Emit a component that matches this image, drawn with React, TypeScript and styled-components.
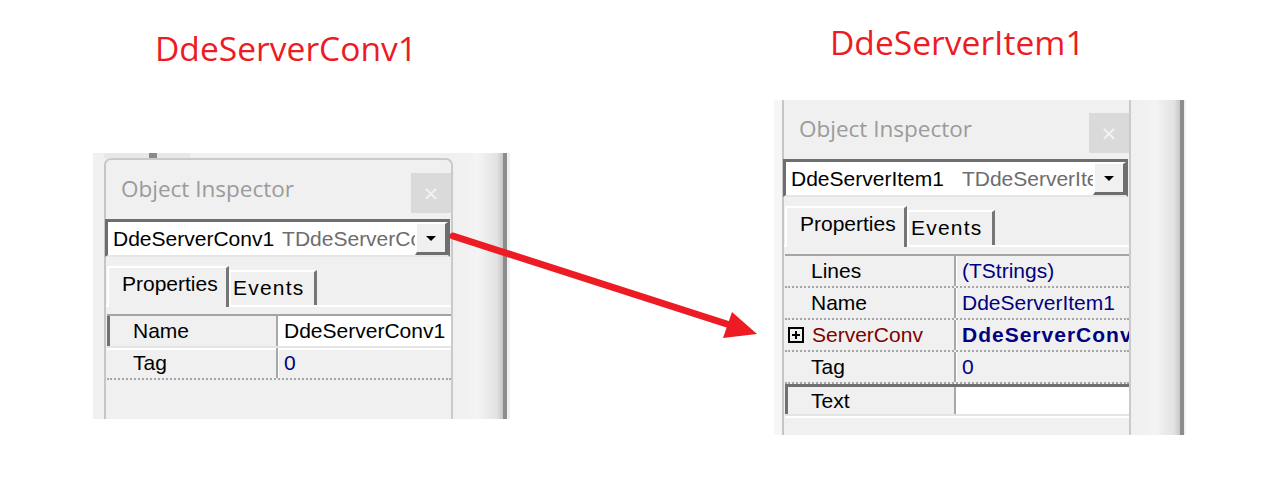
import styled, { createGlobalStyle } from "styled-components";

interface PropRow {
  name: string;
  value: string;
  selected?: boolean;
  expandable?: boolean;
  plainValue?: boolean;
}

interface ShotProps {
  objectName: string;
  typeName: string;
  typeGap: number;
  rows: PropRow[];
  framed?: boolean;
  width: number;
  height: number;
  gutter: number;
  gutterColor: string;
  tail: number;
}

const GlobalStyle = createGlobalStyle`
  html, body {
    margin: 0;
    padding: 0;
    background: #ffffff;
  }
  body {
    font-family: "Liberation Sans", Arial, sans-serif;
  }
`;

const Page = styled.div`
  position: relative;
  width: 1288px;
  height: 494px;
  box-sizing: border-box;
  padding-left: 93px;
  display: flex;
  align-items: flex-start;
  gap: 264px;
  overflow: hidden;
`;

const Column = styled.div<{ $top: number }>`
  display: flex;
  flex-direction: column;
  padding-top: ${(p) => p.$top}px;
`;

const Caption = styled.div<{ $indent: number; $gap: number }>`
  margin-left: ${(p) => p.$indent}px;
  margin-bottom: ${(p) => p.$gap}px;
  height: 34px;
  font-family: "Open Sans", "Noto Sans", sans-serif;
  font-size: 33.6px;
  line-height: 34px;
  color: #ed1c24;
  white-space: nowrap;
`;

const Shot = styled.div<{ $w: number; $h: number }>`
  display: flex;
  width: ${(p) => p.$w}px;
  height: ${(p) => p.$h}px;
  background: #f0f0f0;
  overflow: hidden;
`;

const Gutter = styled.div<{ $w: number; $bg: string }>`
  flex: none;
  width: ${(p) => p.$w}px;
  background: ${(p) => p.$bg};
`;

const Main = styled.div`
  flex: none;
  width: 349px;
  display: flex;
  flex-direction: column;
`;

const TopEdge = styled.div`
  flex: none;
  height: 5px;
  display: flex;
  background: linear-gradient(to right, #e8e8e8 0, #e8e8e8 86px, #f0f0f0 86px);
`;

const Tick = styled.div`
  margin-left: 45px;
  width: 8px;
  background: #8a8a8a;
`;

const Panel = styled.div<{ $framed?: boolean }>`
  flex: 1;
  display: flex;
  flex-direction: column;
  background: #f0f0f0;
  border-left: 2px solid #c6c6c6;
  border-right: 2px solid #cacaca;
  ${(p) =>
    p.$framed &&
    `
    border-top: 2px solid #cacaca;
    border-radius: 7px 7px 0 0;
  `}
`;

const Header = styled.div`
  flex: none;
  height: 59px;
  display: flex;
  align-items: flex-start;
  justify-content: space-between;
`;

const Title = styled.div`
  margin-top: 14px;
  padding-left: 15px;
  font-family: "Open Sans", "Noto Sans", sans-serif;
  font-size: 22.5px;
  line-height: 30px;
  color: #9b9b9b;
`;

const CloseBox = styled.div`
  margin-top: 13px;
  width: 40px;
  height: 40px;
  background: #dadada;
  color: #f4f4f4;
  font-family: "DejaVu Sans", sans-serif;
  font-size: 20px;
  display: flex;
  align-items: center;
  justify-content: center;
`;

const Combo = styled.div`
  flex: none;
  height: 38px;
  margin: 0 1px 0 -1px;
  box-sizing: border-box;
  display: flex;
  background: #ffffff;
  border-top: 3px solid #6e6e6e;
  border-left: 3px solid #6e6e6e;
  border-right: 2px solid #6e6e6e;
  border-bottom: 2px solid #e6e6e6;
`;

const ComboText = styled.div`
  flex: 1;
  overflow: hidden;
  white-space: nowrap;
  padding-left: 5px;
  font-size: 21px;
  line-height: 33px;
  color: #000000;
`;

const TypeName = styled.span<{ $gap: number }>`
  margin-left: ${(p) => p.$gap}px;
  color: #6d6d6d;
`;

const DropButton = styled.div`
  flex: none;
  width: 33px;
  box-sizing: border-box;
  background: #f0f0f0;
  border-top: 2px solid #ffffff;
  border-left: 2px solid #ffffff;
  border-right: 3px solid #6e6e6e;
  border-bottom: 3px solid #6e6e6e;
  display: flex;
  align-items: center;
  justify-content: center;
  &::after {
    content: "";
    border-left: 5px solid transparent;
    border-right: 5px solid transparent;
    border-top: 5px solid #000000;
  }
`;

const TabRow = styled.div`
  flex: none;
  margin-top: 9px;
  height: 41px;
  box-sizing: border-box;
  display: flex;
  align-items: flex-end;
  padding-left: 1px;
  border-bottom: 2px solid #ffffff;
`;

const Tab = styled.div<{ $active?: boolean; $w: number }>`
  width: ${(p) => p.$w}px;
  height: ${(p) => (p.$active ? 41 : 35)}px;
  margin-bottom: ${(p) => (p.$active ? -2 : 0)}px;
  box-sizing: border-box;
  background: #f0f0f0;
  border-top: 2px solid #ffffff;
  border-left: 2px solid #ffffff;
  border-right: 3px solid #767676;
  padding-left: ${(p) => (p.$active ? 13 : 2)}px;
  font-size: 21px;
  line-height: 32px;
  color: #000000;
  letter-spacing: ${(p) => (p.$active ? 0 : 1.2)}px;
  position: relative;
`;

const Grid = styled.div`
  flex: none;
  margin-top: 7px;
  margin-left: 1px;
  border-top: 2px solid #a4a4a4;
`;

const Row = styled.div<{ $selected?: boolean }>`
  display: grid;
  grid-template-columns: 171px 1fr;
  height: 32px;
  box-sizing: border-box;
  border-bottom: ${(p) => (p.$selected ? "2px solid #e4e4e4" : "2px dotted #a6a6a6")};
  ${(p) =>
    p.$selected &&
    `
    border-top: 3px solid #707070;
    box-shadow: 0 2px 0 #ffffff;
    &:first-child { border-top: none; height: 32px; }
  `}
`;

const NameCell = styled.div<{ $selected?: boolean; $expandable?: boolean }>`
  display: flex;
  align-items: center;
  gap: 8px;
  box-sizing: border-box;
  padding-left: ${(p) => (p.$expandable ? 3 : p.$selected ? 23 : 26)}px;
  border-left: ${(p) => (p.$selected ? "3px solid #707070" : "none")};
  border-right: 2px solid #a8a8a8;
  font-size: 21px;
  color: ${(p) => (p.$expandable ? "#800000" : "#000000")};
  white-space: nowrap;
`;

const ValueCell = styled.div<{ $selected?: boolean; $bold?: boolean; $plain?: boolean }>`
  display: flex;
  align-items: center;
  overflow: hidden;
  white-space: nowrap;
  padding-left: 5px;
  border-left: 1px solid #ffffff;
  background: ${(p) => (p.$selected ? "#ffffff" : "transparent")};
  font-size: 21px;
  font-weight: ${(p) => (p.$bold ? 700 : 400)};
  letter-spacing: ${(p) => (p.$bold ? 1 : 0)}px;
  color: ${(p) => (p.$plain ? "#000000" : "#000080")};
`;

const Strip = styled.div<{ $tail: number }>`
  flex: 1;
  display: flex;
  &::before {
    content: "";
    flex: 1;
    background: linear-gradient(
      to right,
      #f0f0f0 0%,
      #f1f1f1 30%,
      #f4f4f4 50%,
      #e2e2e2 88%,
      #c6c6c6 100%
    );
  }
  &::after {
    content: "";
    flex: none;
    width: 4px;
    margin-right: ${(p) => p.$tail}px;
    background: #8c8c8c;
  }
`;

const Overlay = styled.svg`
  position: absolute;
  left: 0;
  top: 0;
  pointer-events: none;
`;

function ExpandIcon() {
  return (
    <svg width="16" height="16" viewBox="0 0 16 16">
      <rect x="1" y="1" width="14" height="14" fill="none" stroke="#000" strokeWidth="2" />
      <path d="M4 8h8M8 4v8" stroke="#000" strokeWidth="2" />
    </svg>
  );
}

function InspectorShot({
  objectName,
  typeName,
  typeGap,
  rows,
  framed,
  width,
  height,
  gutter,
  gutterColor,
  tail,
}: ShotProps) {
  return (
    <Shot $w={width} $h={height}>
      <Gutter $w={gutter} $bg={gutterColor} />
      <Main>
        {framed && (
          <TopEdge>
            <Tick />
          </TopEdge>
        )}
        <Panel $framed={framed}>
          <Header>
            <Title>Object Inspector</Title>
            <CloseBox>×</CloseBox>
          </Header>
          <Combo>
            <ComboText>
              {objectName}
              <TypeName $gap={typeGap}>{typeName}</TypeName>
            </ComboText>
            <DropButton />
          </Combo>
          <TabRow>
            <Tab $active $w={122}>
              Properties
            </Tab>
            <Tab $w={88}>Events</Tab>
          </TabRow>
          <Grid>
            {rows.map((r) => (
              <Row key={r.name} $selected={r.selected}>
                <NameCell $selected={r.selected} $expandable={r.expandable}>
                  {r.expandable && <ExpandIcon />}
                  {r.name}
                </NameCell>
                <ValueCell
                  $selected={r.selected}
                  $bold={r.expandable}
                  $plain={r.plainValue}
                >
                  {r.value}
                </ValueCell>
              </Row>
            ))}
          </Grid>
        </Panel>
      </Main>
      <Strip $tail={tail} />
    </Shot>
  );
}

const convRows: PropRow[] = [
  { name: "Name", value: "DdeServerConv1", selected: true, plainValue: true },
  { name: "Tag", value: "0" },
];

const itemRows: PropRow[] = [
  { name: "Lines", value: "(TStrings)" },
  { name: "Name", value: "DdeServerItem1" },
  { name: "ServerConv", value: "DdeServerConv1", expandable: true },
  { name: "Tag", value: "0" },
  { name: "Text", value: "", selected: true },
];

export default function App() {
  return (
    <>
      <GlobalStyle />
      <Page>
        <Column $top={31}>
          <Caption $indent={62} $gap={88}>
            DdeServerConv1
          </Caption>
          <InspectorShot
            objectName="DdeServerConv1"
            typeName="TDdeServerConv"
            typeGap={8}
            rows={convRows}
            framed
            width={417}
            height={266}
            gutter={11}
            gutterColor="#f0f0f0"
            tail={3}
          />
        </Column>
        <Column $top={25}>
          <Caption $indent={56} $gap={41}>
            DdeServerItem1
          </Caption>
          <InspectorShot
            objectName="DdeServerItem1"
            typeName="TDdeServerItem"
            typeGap={18}
            rows={itemRows}
            width={412}
            height={335}
            gutter={8}
            gutterColor="#f6f6f6"
            tail={2}
          />
        </Column>
        <Overlay width="1288" height="494" viewBox="0 0 1288 494">
          <line
            x1="453"
            y1="236"
            x2="733"
            y2="326"
            stroke="#ed1c24"
            strokeWidth="7"
            strokeLinecap="round"
          />
          <polygon points="757,334 732,312 723,338" fill="#ed1c24" />
        </Overlay>
      </Page>
    </>
  );
}
